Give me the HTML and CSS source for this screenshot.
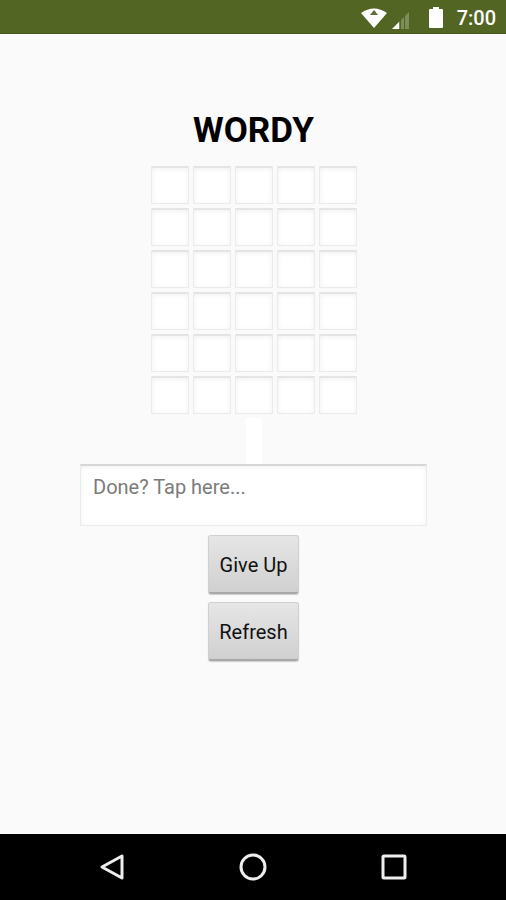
FILE: index.html
```html
<!DOCTYPE html>
<html lang="en">
<head>
<meta charset="utf-8">
<meta name="viewport" content="width=device-width, initial-scale=1">
<title>Wordy</title>
<link rel="stylesheet" href="styles.css">
</head>
<body>
<header class="status">
  <svg class="wifi" viewBox="0 0 26 20" width="26" height="20" aria-hidden="true">
    <path fill="#fff" d="M0 5Q13-4 26 5L13 20Z"/>
    <path fill="#5d6b37" d="M13 2L17 7H9Z"/>
  </svg>
  <svg class="signal" viewBox="0 0 18 18" width="18" height="18" aria-hidden="true">
    <path fill="#7f8e58" d="M0 18L17 1V18Z"/>
    <path fill="#fff" d="M0 18L7 11V18Z"/>
    <path stroke="#536523" d="M8.5 8V18M12.5 4V18"/>
  </svg>
  <svg class="battery" viewBox="0 0 14 21" width="14" height="21" aria-hidden="true">
    <path fill="#fff" d="M4 0H10V2H13Q14 2 14 3V20Q14 21 13 21H1Q0 21 0 20V3Q0 2 1 2H4Z"/>
  </svg>
  <time>7:00</time>
</header>
<main class="game">
  <h1>WORDY</h1>
  <div class="board">
    <input class="cell" aria-label="Row 1 letter 1" maxlength="1"><input class="cell" aria-label="Row 1 letter 2" maxlength="1"><input class="cell" aria-label="Row 1 letter 3" maxlength="1"><input class="cell" aria-label="Row 1 letter 4" maxlength="1"><input class="cell" aria-label="Row 1 letter 5" maxlength="1">
    <input class="cell" aria-label="Row 2 letter 1" maxlength="1"><input class="cell" aria-label="Row 2 letter 2" maxlength="1"><input class="cell" aria-label="Row 2 letter 3" maxlength="1"><input class="cell" aria-label="Row 2 letter 4" maxlength="1"><input class="cell" aria-label="Row 2 letter 5" maxlength="1">
    <input class="cell" aria-label="Row 3 letter 1" maxlength="1"><input class="cell" aria-label="Row 3 letter 2" maxlength="1"><input class="cell" aria-label="Row 3 letter 3" maxlength="1"><input class="cell" aria-label="Row 3 letter 4" maxlength="1"><input class="cell" aria-label="Row 3 letter 5" maxlength="1">
    <input class="cell" aria-label="Row 4 letter 1" maxlength="1"><input class="cell" aria-label="Row 4 letter 2" maxlength="1"><input class="cell" aria-label="Row 4 letter 3" maxlength="1"><input class="cell" aria-label="Row 4 letter 4" maxlength="1"><input class="cell" aria-label="Row 4 letter 5" maxlength="1">
    <input class="cell" aria-label="Row 5 letter 1" maxlength="1"><input class="cell" aria-label="Row 5 letter 2" maxlength="1"><input class="cell" aria-label="Row 5 letter 3" maxlength="1"><input class="cell" aria-label="Row 5 letter 4" maxlength="1"><input class="cell" aria-label="Row 5 letter 5" maxlength="1">
    <input class="cell" aria-label="Row 6 letter 1" maxlength="1"><input class="cell" aria-label="Row 6 letter 2" maxlength="1"><input class="cell" aria-label="Row 6 letter 3" maxlength="1"><input class="cell" aria-label="Row 6 letter 4" maxlength="1"><input class="cell" aria-label="Row 6 letter 5" maxlength="1">
  </div>
  <div class="message"></div>
  <textarea class="done" aria-label="Done" placeholder="Done? Tap here..."></textarea>
  <div class="actions">
    <button class="action" type="button">Give Up</button>
    <button class="action" type="button">Refresh</button>
  </div>
</main>
<nav class="system">
  <button type="button" aria-label="Back"><svg viewBox="0 0 28 28" width="28" height="28"><path d="M24 3V25L4 14Z"/></svg></button>
  <button type="button" aria-label="Home"><svg viewBox="0 0 28 28" width="28" height="28"><circle cx="14" cy="14" r="12"/></svg></button>
  <button type="button" aria-label="Recent apps"><svg viewBox="0 0 28 28" width="28" height="28"><rect x="3" y="3" width="22" height="22" rx="1"/></svg></button>
</nav>
</body>
</html>
```
FILE: styles.css
```css
* {
  box-sizing: border-box;
}

body {
  margin: 0;
  min-height: 100vh;
  display: flex;
  flex-direction: column;
  background: #fafafa;
  color: #000;
  font-family: Roboto, "Liberation Sans", sans-serif;
}

.status {
  height: 34px;
  padding: 2px 10px 0;
  display: flex;
  align-items: center;
  justify-content: flex-end;
  background: #536523;
  border-bottom: 1px solid #465719;
  color: #fff;
  font-size: 20px;
  font-weight: 500;
}

.signal {
  margin: 4px 19px 0 5px;
}

.battery {
  margin-right: 14px;
}

.game {
  flex: 1;
  display: flex;
  flex-direction: column;
  align-items: center;
  padding: 77px 0 0 1px;
}

h1 {
  margin: 0 0 15px;
  font-size: 35px;
  line-height: 40px;
  font-weight: 700;
}

.board {
  display: grid;
  grid-template-columns: repeat(5, 38px);
  grid-auto-rows: 38px;
  gap: 4px;
}

.cell,
.done {
  margin: 0;
  border: 1px solid #ebebeb;
  border-top: 2px solid #e4e4e4;
  border-radius: 1px;
  background: #fff;
  box-shadow: inset 0 1px 5px #f0f0f0;
  font-family: inherit;
  outline: 0;
}

.cell {
  width: 100%;
  padding: 0;
  text-align: center;
  font-size: 20px;
}

.message {
  width: 16px;
  height: 46px;
  margin-top: 4px;
  background: #fff;
}

.done {
  width: calc(100% - 158px);
  height: 62px;
  padding: 9px 12px;
  border-top-color: #d6d6d6;
  font-size: 20px;
  line-height: 24px;
  resize: none;
}

.done::placeholder {
  color: #7b7b7b;
}

.actions {
  display: grid;
  gap: 8px;
  margin-top: 9px;
}

.action {
  height: 59px;
  padding: 2px 10px 0;
  border: 1px solid #cfcfcf;
  border-bottom: 2px solid #a8a8a8;
  border-radius: 3px;
  background: linear-gradient(#e6e6e6, #d0d0d0);
  box-shadow: 0 1px 1px #ccc;
  color: #111;
  font-family: inherit;
  font-size: 20px;
}

.system {
  height: 66px;
  padding: 0 42px;
  display: grid;
  grid-template-columns: repeat(3, 1fr);
  background: #000;
}

.system button {
  display: grid;
  place-items: center;
  padding: 0;
  border: 0;
  background: none;
}

.system svg {
  fill: none;
  stroke: #eee;
  stroke-width: 3;
  stroke-linejoin: round;
}
```
